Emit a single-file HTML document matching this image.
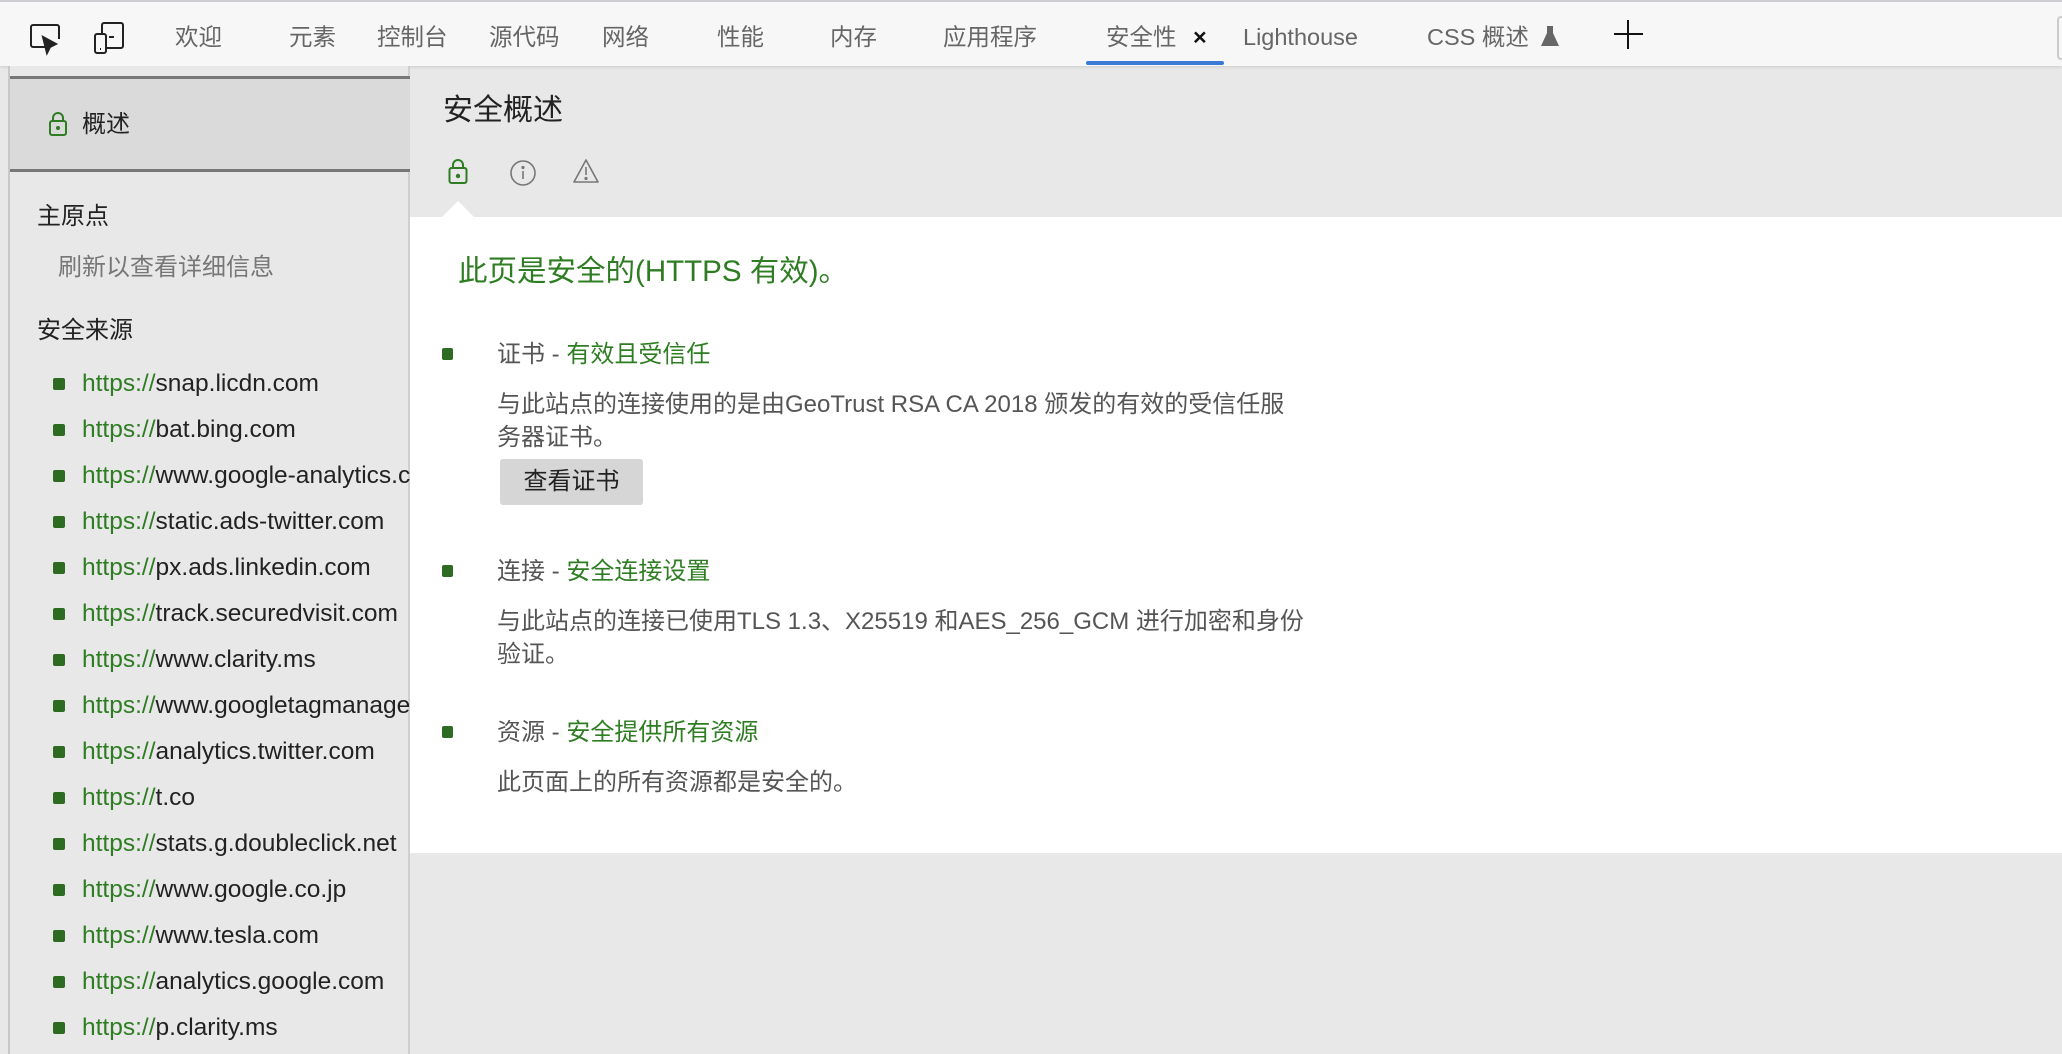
<!DOCTYPE html>
<html><head><meta charset="utf-8"><style>
*{margin:0;padding:0;box-sizing:border-box}
body{width:2062px;height:1054px;overflow:hidden;background:#e8e8e8;font-family:"Liberation Sans","Noto Sans CJK SC",sans-serif;position:relative}
.a{position:absolute;white-space:nowrap}
#top{position:absolute;left:0;top:0;width:2062px;height:66px;background:#f7f7f7;border-top:2px solid #cdcdd2;box-shadow:0 1px 3px rgba(0,0,0,.12)}
.tab{position:absolute;top:20px;font-size:23.5px;color:#666;line-height:30px}
#side{position:absolute;left:8px;top:66px;width:402px;height:988px;background:#e8e8e8;border-left:2px solid #c8c8c8;border-right:2px solid #cfcfcf}
#sel{position:absolute;left:0;top:10px;width:400px;height:96px;background:#dadada;border-top:3px solid #777;border-bottom:3px solid #777}
.u{position:absolute;left:72px;font-size:24.5px;color:#222;line-height:28px;white-space:nowrap}
.u b{font-weight:normal;color:#2e7d22}
.u:before{content:"";position:absolute;left:-29px;top:8px;width:12px;height:12px;border-radius:2px;background:#2e6b22}
#white{position:absolute;left:410px;top:217px;width:1652px;height:636px;background:#fff}
.bt{position:absolute;left:497px;font-size:24px;color:#555;line-height:30px;white-space:nowrap}
.bt i{font-style:normal;color:#2e7d22}
.bt:before{content:"";position:absolute;left:-55px;top:8px;width:11px;height:12px;border-radius:2px;background:#2e6b22}
.d{position:absolute;left:497px;font-size:24px;color:#555;line-height:33px;white-space:nowrap}
</style></head><body>
<div id="top">
<svg class="a" style="left:28px;top:20px" width="34" height="34" viewBox="0 0 34 34" fill="none" stroke="#222" stroke-width="2"><path d="M20 25H5a2 2 0 0 1-2-2V5a2 2 0 0 1 2-2h24a2 2 0 0 1 2 2v12"/><path d="M15 15l4 16 3-6 6-3z" fill="#222"/></svg>
<svg class="a" style="left:92px;top:18px" width="36" height="36" viewBox="0 0 36 36" fill="none" stroke="#222" stroke-width="2"><rect x="10" y="3" width="21" height="25" rx="2"/><rect x="3" y="14" width="11" height="19" rx="2" fill="#f7f7f7"/><path d="M8 29h1M17 17h5"/></svg>
<div class="tab" style="left:175px">欢迎</div>
<div class="tab" style="left:289px">元素</div>
<div class="tab" style="left:377px">控制台</div>
<div class="tab" style="left:489px">源代码</div>
<div class="tab" style="left:602px">网络</div>
<div class="tab" style="left:717px">性能</div>
<div class="tab" style="left:830px">内存</div>
<div class="tab" style="left:943px">应用程序</div>
<div class="tab" style="left:1106px">安全性</div>
<div class="tab" style="left:1193px;color:#111;font-weight:bold">×</div>
<div class="tab" style="left:1243px">Lighthouse</div>
<div class="tab" style="left:1427px">CSS 概述</div>
<svg class="a" style="left:1540px;top:22px" width="20" height="24" viewBox="0 0 20 24"><path d="M7 2h6v7l6 13H1L7 9z" fill="#666"/></svg>
<svg class="a" style="left:1612px;top:16px" width="32" height="32" viewBox="0 0 32 32" stroke="#111" stroke-width="2"><path d="M16 2v29M2 16h29"/></svg>
<div class="a" style="left:1086px;top:59px;width:138px;height:4px;background:#3a7bd5;border-radius:2px"></div>
<div class="a" style="left:2057px;top:14px;width:10px;height:44px;border:2px solid #ccc;border-radius:4px"></div>
</div>
<div id="side">
<div id="sel"></div>
<svg class="a" style="left:38px;top:45px" width="20" height="26" viewBox="0 0 20 26" fill="none" stroke="#2e7d22" stroke-width="2"><rect x="2" y="10" width="16" height="14" rx="2"/><path d="M5 10V7a5 5 0 0 1 10 0v3"/><circle cx="10" cy="17" r="1" fill="#2e7d22"/></svg>
<div class="a" style="left:72px;top:44px;font-size:24px;color:#222;line-height:30px">概述</div>
<div class="a" style="left:27px;top:136px;font-size:24px;color:#222;line-height:30px">主原点</div>
<div class="a" style="left:48px;top:187px;font-size:24px;color:#777;line-height:30px">刷新以查看详细信息</div>
<div class="a" style="left:27px;top:250px;font-size:24px;color:#222;line-height:30px">安全来源</div>
<div style="position:absolute;left:0;top:0;width:400px;height:988px;overflow:hidden">
<div class="u" style="top:304px"><b>https://</b>snap.licdn.com</div>
<div class="u" style="top:350px"><b>https://</b>bat.bing.com</div>
<div class="u" style="top:396px"><b>https://</b>www.google-analytics.com</div>
<div class="u" style="top:442px"><b>https://</b>static.ads-twitter.com</div>
<div class="u" style="top:488px"><b>https://</b>px.ads.linkedin.com</div>
<div class="u" style="top:534px"><b>https://</b>track.securedvisit.com</div>
<div class="u" style="top:580px"><b>https://</b>www.clarity.ms</div>
<div class="u" style="top:626px"><b>https://</b>www.googletagmanager.com</div>
<div class="u" style="top:672px"><b>https://</b>analytics.twitter.com</div>
<div class="u" style="top:718px"><b>https://</b>t.co</div>
<div class="u" style="top:764px"><b>https://</b>stats.g.doubleclick.net</div>
<div class="u" style="top:810px"><b>https://</b>www.google.co.jp</div>
<div class="u" style="top:856px"><b>https://</b>www.tesla.com</div>
<div class="u" style="top:902px"><b>https://</b>analytics.google.com</div>
<div class="u" style="top:948px"><b>https://</b>p.clarity.ms</div>
</div>
</div>
<div class="a" style="left:443px;top:93px;font-size:30px;color:#222;line-height:36px">安全概述</div>
<svg class="a" style="left:448px;top:159px" width="20" height="26" viewBox="0 0 20 26" fill="none" stroke="#2e7d22" stroke-width="2"><rect x="1.5" y="9" width="17" height="15" rx="2"/><path d="M5 9V6a5 5 0 0 1 10 0v3"/><circle cx="10" cy="17" r="1.2" fill="#2e7d22"/></svg>
<svg class="a" style="left:509px;top:159px" width="28" height="28" viewBox="0 0 28 28" fill="none" stroke="#777" stroke-width="1.6"><circle cx="14" cy="14" r="12"/><path d="M14 12v8"/><circle cx="14" cy="8.5" r=".8" fill="#777"/></svg>
<svg class="a" style="left:572px;top:158px" width="28" height="26" viewBox="0 0 28 26" fill="none" stroke="#777" stroke-width="1.6"><path d="M14 2L2 24h24z" stroke-linejoin="round"/><path d="M14 9v8"/><circle cx="14" cy="20.5" r=".8" fill="#777"/></svg>
<div id="white"></div>
<div class="a" style="left:442px;top:201px;width:0;height:0;border-left:16px solid transparent;border-right:16px solid transparent;border-bottom:16px solid #fff"></div>
<div class="a" style="left:458px;top:254px;font-size:29.5px;color:#2e7d22;line-height:36px">此页是安全的(HTTPS 有效)。</div>
<div class="bt" style="top:340px">证书 - <i>有效且受信任</i></div>
<div class="d" style="top:388px">与此站点的连接使用的是由GeoTrust RSA CA 2018 颁发的有效的受信任服<br>务器证书。</div>
<div class="a" style="left:500px;top:459px;width:143px;height:46px;background:#d6d6d6;border-radius:3px;font-size:24px;color:#222;line-height:46px;text-align:center">查看证书</div>
<div class="bt" style="top:557px">连接 - <i>安全连接设置</i></div>
<div class="d" style="top:605px">与此站点的连接已使用TLS 1.3、X25519 和AES_256_GCM 进行加密和身份<br>验证。</div>
<div class="bt" style="top:718px">资源 - <i>安全提供所有资源</i></div>
<div class="d" style="top:766px">此页面上的所有资源都是安全的。</div>
</body></html>
